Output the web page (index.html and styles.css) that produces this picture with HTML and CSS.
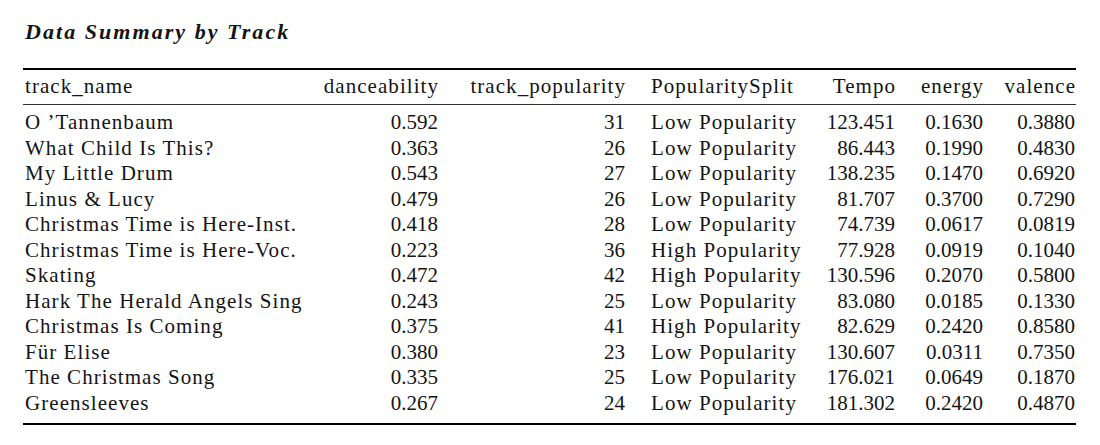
FILE: index.html
```html
<!DOCTYPE html>
<html>
<head>
<meta charset="utf-8">
<link rel="stylesheet" href="styles.css">
</head>
<body>
<div class="page">
  <h1 class="title">Data Summary by Track</h1>
  <table class="summary">
    <colgroup>
      <col class="c-name"><col class="c-dance"><col class="c-pop"><col class="c-split"><col class="c-tempo"><col class="c-energy"><col class="c-valence">
    </colgroup>
    <thead>
      <tr>
        <th class="l first">track_name</th>
        <th class="r">danceability</th>
        <th class="r">track_popularity</th>
        <th class="l">PopularitySplit</th>
        <th class="r">Tempo</th>
        <th class="r">energy</th>
        <th class="r last">valence</th>
      </tr>
    </thead>
    <tbody>
      <tr><td class="l first">O ’Tannenbaum</td><td class="r">0.592</td><td class="r">31</td><td class="l">Low Popularity</td><td class="r">123.451</td><td class="r">0.1630</td><td class="r last">0.3880</td></tr>
      <tr><td class="l first">What Child Is This?</td><td class="r">0.363</td><td class="r">26</td><td class="l">Low Popularity</td><td class="r">86.443</td><td class="r">0.1990</td><td class="r last">0.4830</td></tr>
      <tr><td class="l first">My Little Drum</td><td class="r">0.543</td><td class="r">27</td><td class="l">Low Popularity</td><td class="r">138.235</td><td class="r">0.1470</td><td class="r last">0.6920</td></tr>
      <tr><td class="l first">Linus &amp; Lucy</td><td class="r">0.479</td><td class="r">26</td><td class="l">Low Popularity</td><td class="r">81.707</td><td class="r">0.3700</td><td class="r last">0.7290</td></tr>
      <tr><td class="l first">Christmas Time is Here-Inst.</td><td class="r">0.418</td><td class="r">28</td><td class="l">Low Popularity</td><td class="r">74.739</td><td class="r">0.0617</td><td class="r last">0.0819</td></tr>
      <tr><td class="l first">Christmas Time is Here-Voc.</td><td class="r">0.223</td><td class="r">36</td><td class="l">High Popularity</td><td class="r">77.928</td><td class="r">0.0919</td><td class="r last">0.1040</td></tr>
      <tr><td class="l first">Skating</td><td class="r">0.472</td><td class="r">42</td><td class="l">High Popularity</td><td class="r">130.596</td><td class="r">0.2070</td><td class="r last">0.5800</td></tr>
      <tr><td class="l first">Hark The Herald Angels Sing</td><td class="r">0.243</td><td class="r">25</td><td class="l">Low Popularity</td><td class="r">83.080</td><td class="r">0.0185</td><td class="r last">0.1330</td></tr>
      <tr><td class="l first">Christmas Is Coming</td><td class="r">0.375</td><td class="r">41</td><td class="l">High Popularity</td><td class="r">82.629</td><td class="r">0.2420</td><td class="r last">0.8580</td></tr>
      <tr><td class="l first">Für Elise</td><td class="r">0.380</td><td class="r">23</td><td class="l">Low Popularity</td><td class="r">130.607</td><td class="r">0.0311</td><td class="r last">0.7350</td></tr>
      <tr><td class="l first">The Christmas Song</td><td class="r">0.335</td><td class="r">25</td><td class="l">Low Popularity</td><td class="r">176.021</td><td class="r">0.0649</td><td class="r last">0.1870</td></tr>
      <tr><td class="l first">Greensleeves</td><td class="r">0.267</td><td class="r">24</td><td class="l">Low Popularity</td><td class="r">181.302</td><td class="r">0.2420</td><td class="r last">0.4870</td></tr>
    </tbody>
  </table>
</div>
</body>
</html>
```

FILE: styles.css
```css
html, body {
  margin: 0;
  padding: 0;
  background: #ffffff;
}

.page {
  padding: 20px 0 0 23px;
  font-family: "Liberation Serif", "Times New Roman", serif;
  color: #141414;
}

.title {
  margin: 0 0 24px 2px;
  font-size: 22px;
  line-height: 24px;
  font-weight: bold;
  font-style: italic;
  letter-spacing: 2.05px;
}

.summary {
  width: 1053px;
  table-layout: fixed;
  border-collapse: collapse;
  border-top: 2px solid #000;
  border-bottom: 2px solid #000;
  font-size: 21px;
}

.c-name { width: 290px; }
.c-dance { width: 138px; }
.c-pop { width: 187px; }
.c-split { width: 175px; }
.c-tempo { width: 95px; }
.c-energy { width: 88px; }
.c-valence { width: 80px; }

.summary th,
.summary td {
  font-weight: normal;
  line-height: 25.5px;
  padding: 0 13px;
  white-space: nowrap;
}

.summary th,
.summary td.l {
  letter-spacing: 1.05px;
}

.summary th.r {
  padding-left: 0;
  padding-right: 12px;
}

.summary thead th {
  padding-top: 4px;
  padding-bottom: 4.5px;
  border-bottom: 1px solid #333;
}

.summary tbody tr:first-child td { padding-top: 5px; }
.summary tbody tr:last-child td { padding-bottom: 7px; }

.l { text-align: left; }
.r { text-align: right; }
.summary .first { padding-left: 2px; }
.summary td.last { padding-right: 1px; }
.summary th.last { padding-right: 0; }
```
